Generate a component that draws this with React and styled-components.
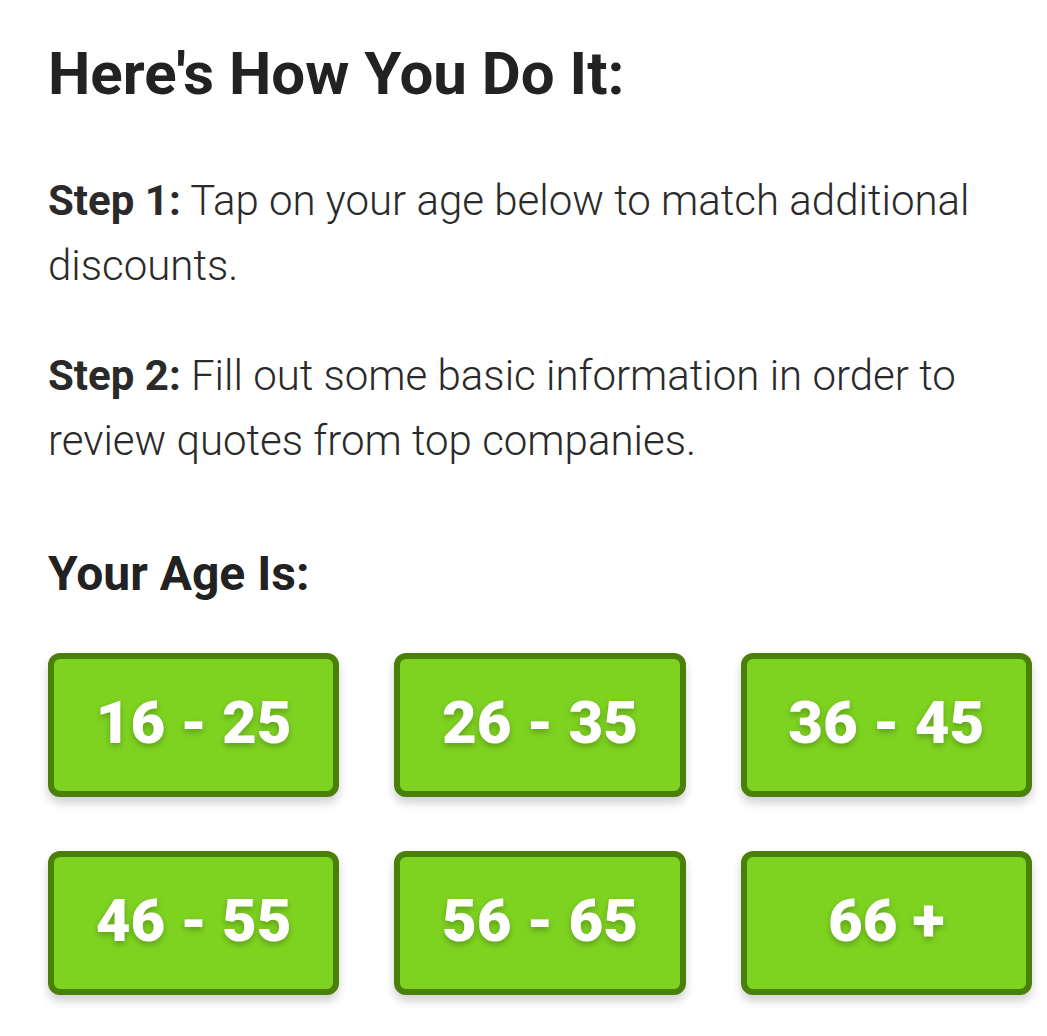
import React from 'react';
import styled, { createGlobalStyle } from 'styled-components';

const GlobalStyle = createGlobalStyle`
  body {
    margin: 0;
    background: #ffffff;
    font-family: Roboto, "Liberation Sans", sans-serif;
  }
`;

const Page = styled.section`
  padding: 38px 15px 40px 48px;
  color: #222;
`;

const Heading = styled.h1`
  font-size: 60px;
  line-height: 72px;
  font-weight: 700;
  margin: 0;
  color: #222;
`;

const Step = styled.p`
  font-size: 42px;
  line-height: 65px;
  font-weight: 300;
  color: #2a2a2a;
  margin: ${(p) => (p.first ? '58px' : '45px')} 0 0 0;

  strong {
    font-weight: 700;
  }
`;

const AgeTitle = styled.h2`
  font-size: 48px;
  line-height: 58px;
  font-weight: 700;
  margin: 72px 0 0 0;
  color: #222;
`;

const AgeGrid = styled.div`
  display: grid;
  grid-template-columns: repeat(3, 1fr);
  column-gap: 55px;
  row-gap: 54px;
  margin-top: 50px;
`;

const AgeButton = styled.button`
  height: 144px;
  box-sizing: border-box;
  background-color: #7ed321;
  border: 6px solid #4a8007;
  border-radius: 12px;
  box-shadow: 0 6px 10px rgba(0, 0, 0, 0.18);
  color: #ffffff;
  font-family: Roboto, "Liberation Sans", sans-serif;
  font-size: 60px;
  font-weight: 900;
  text-shadow: 0 3px 6px rgba(0, 0, 0, 0.25);
  cursor: pointer;
  padding: 0 0 6px 0;
`;

const ages = ['16 - 25', '26 - 35', '36 - 45', '46 - 55', '56 - 65', '66 +'];

const App = () => {
  return (
    <Page>
      <GlobalStyle />
      <Heading>Here's How You Do It:</Heading>
      <Step first>
        <strong>Step 1:</strong> Tap on your age below to match additional discounts.
      </Step>
      <Step>
        <strong>Step 2:</strong> Fill out some basic information in order to review quotes from top companies.
      </Step>
      <AgeTitle>Your Age Is:</AgeTitle>
      <AgeGrid>
        {ages.map((age) => (
          <AgeButton key={age}>{age}</AgeButton>
        ))}
      </AgeGrid>
    </Page>
  );
};

export default App;
